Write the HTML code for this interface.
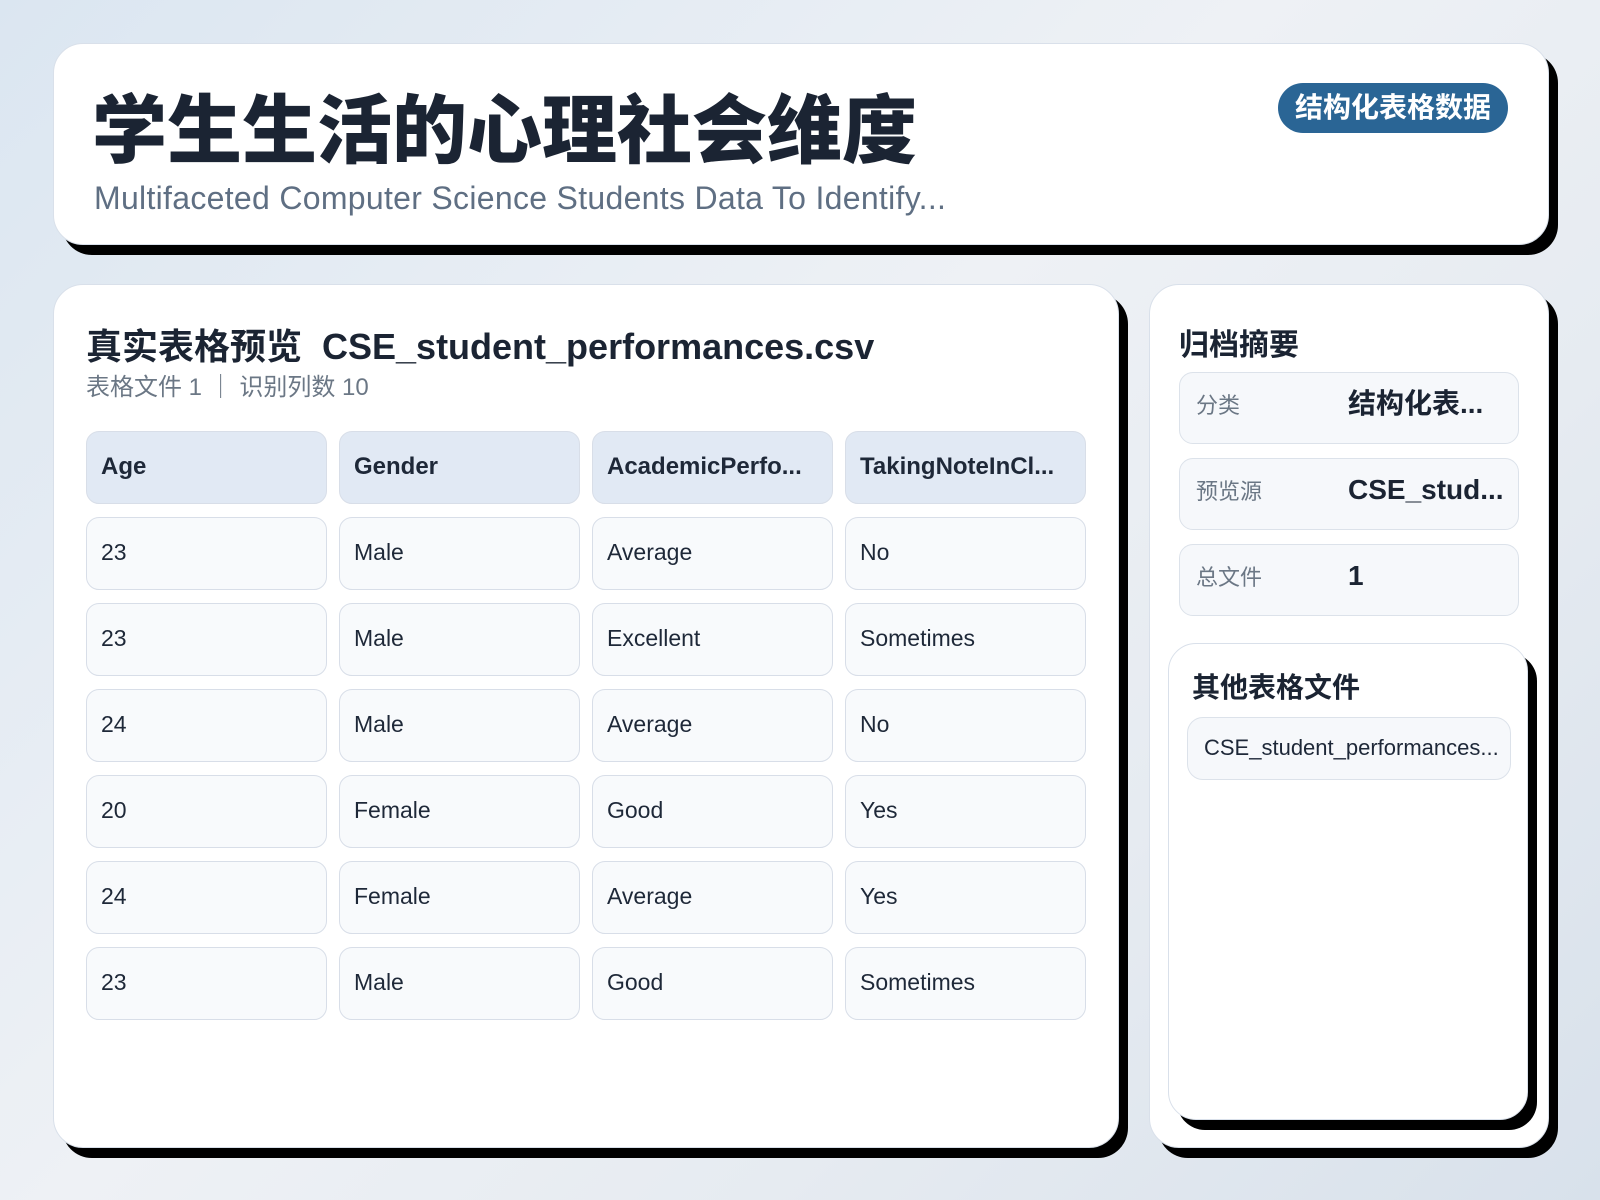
<!DOCTYPE html>
<html><head><meta charset="utf-8"><style>
*{margin:0;padding:0;box-sizing:border-box}
body{width:1600px;height:1200px;overflow:hidden;font-family:"Liberation Sans","Noto Sans CJK SC",sans-serif;background:linear-gradient(135deg,#dbe6f1 0%,#eef1f5 45%,#e6ebf1 70%,#d8e1eb 100%);position:relative;color:#1b2433}
.card{position:absolute;background:#fff;border:1px solid #d9e0ea;border-radius:30px;box-shadow:9px 10px 0 #000}
.title{position:absolute;left:92px;top:90px;font-size:75px;font-weight:900;letter-spacing:0px;color:#1b2433;line-height:1.1}
.sub{position:absolute;left:94px;top:180px;font-size:32px;color:#5f6f83;letter-spacing:0.3px}
.badge{position:absolute;left:1278px;top:83px;width:230px;height:50px;border-radius:25px;background:#2a6595;color:#fff;font-weight:700;font-size:28px;line-height:50px;text-align:center}
.h2{position:absolute;font-weight:700;color:#1b2433}
.cell{position:absolute;width:241px;height:73px;border:1px solid #d8dee8;border-radius:13px;background:#f8fafc;font-size:23px;line-height:69px;padding-left:14px;color:#1e2838;white-space:nowrap;overflow:hidden}
.hd{background:#e1e9f4;font-weight:700;font-size:24px}
.item{position:absolute;left:1179px;width:340px;height:72px;border:1px solid #dce2ea;border-radius:14px;background:#f6f8fb}
.item .l{position:absolute;left:16px;top:0;line-height:66px;font-size:22px;color:#6b7785}
.item .v{position:absolute;left:168px;top:0;line-height:62px;font-size:28px;font-weight:700;color:#1b2433}
</style></head><body>
<div class="card" style="left:53px;top:43px;width:1496px;height:202px"></div>
<div class="title">学生生活的心理社会维度</div>
<div class="sub">Multifaceted Computer Science Students Data To Identify...</div>
<div class="badge">结构化表格数据</div>

<div class="card" style="left:53px;top:284px;width:1066px;height:864px"></div>
<div class="h2" style="left:86px;top:318px;font-size:36px">真实表格预览&nbsp; CSE_student_performances.csv</div>
<div style="position:absolute;left:86px;top:367px;font-size:24px;color:#6b7785">表格文件 1 ｜ 识别列数 10</div>

<div class="cell hd" style="left:86px;top:431px">Age</div>
<div class="cell hd" style="left:339px;top:431px">Gender</div>
<div class="cell hd" style="left:592px;top:431px">AcademicPerfo...</div>
<div class="cell hd" style="left:845px;top:431px">TakingNoteInCl...</div>

<div class="cell" style="left:86px;top:517px">23</div><div class="cell" style="left:339px;top:517px">Male</div><div class="cell" style="left:592px;top:517px">Average</div><div class="cell" style="left:845px;top:517px">No</div>
<div class="cell" style="left:86px;top:603px">23</div><div class="cell" style="left:339px;top:603px">Male</div><div class="cell" style="left:592px;top:603px">Excellent</div><div class="cell" style="left:845px;top:603px">Sometimes</div>
<div class="cell" style="left:86px;top:689px">24</div><div class="cell" style="left:339px;top:689px">Male</div><div class="cell" style="left:592px;top:689px">Average</div><div class="cell" style="left:845px;top:689px">No</div>
<div class="cell" style="left:86px;top:775px">20</div><div class="cell" style="left:339px;top:775px">Female</div><div class="cell" style="left:592px;top:775px">Good</div><div class="cell" style="left:845px;top:775px">Yes</div>
<div class="cell" style="left:86px;top:861px">24</div><div class="cell" style="left:339px;top:861px">Female</div><div class="cell" style="left:592px;top:861px">Average</div><div class="cell" style="left:845px;top:861px">Yes</div>
<div class="cell" style="left:86px;top:947px">23</div><div class="cell" style="left:339px;top:947px">Male</div><div class="cell" style="left:592px;top:947px">Good</div><div class="cell" style="left:845px;top:947px">Sometimes</div>

<div class="card" style="left:1149px;top:284px;width:400px;height:864px"></div>
<div class="h2" style="left:1179px;top:320px;font-size:30px">归档摘要</div>
<div class="item" style="top:372px"><span class="l">分类</span><span class="v">结构化表...</span></div>
<div class="item" style="top:458px"><span class="l">预览源</span><span class="v">CSE_stud...</span></div>
<div class="item" style="top:544px"><span class="l">总文件</span><span class="v">1</span></div>

<div class="card" style="left:1168px;top:643px;width:360px;height:477px;border-radius:28px"></div>
<div class="h2" style="left:1192px;top:666px;font-size:28px">其他表格文件</div>
<div class="item" style="left:1187px;top:717px;width:324px;height:63px;border-radius:16px"><span class="l" style="line-height:59px;font-size:22px;color:#1e2838">CSE_student_performances...</span></div>
</body></html>
